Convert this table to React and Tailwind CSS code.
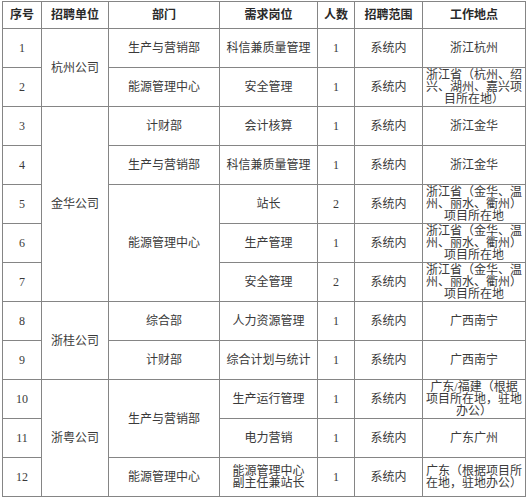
const font = { fontFamily: '"Liberation Serif", "Noto Sans CJK SC", serif' }

const headers = ["序号", "招聘单位", "部门", "需求岗位", "人数", "招聘范围", "工作地点"]
const widths = ["w-[39px]", "w-[67px]", "w-[111px]", "w-[98px]", "w-[37px]", "w-[68px]", "w-[103px]"]

const rows = [
  { no: "1", unit: { text: "杭州公司", span: 2 }, dept: { text: "生产与营销部", span: 1 }, job: ["科信兼质量管理"], num: "1", place: ["浙江杭州"] },
  { no: "2", dept: { text: "能源管理中心", span: 1 }, job: ["安全管理"], num: "1", place: ["浙江省（杭州、绍", "兴、湖州、嘉兴项", "目所在地）"] },
  { no: "3", unit: { text: "金华公司", span: 5 }, dept: { text: "计财部", span: 1 }, job: ["会计核算"], num: "1", place: ["浙江金华"] },
  { no: "4", dept: { text: "生产与营销部", span: 1 }, job: ["科信兼质量管理"], num: "1", place: ["浙江金华"] },
  { no: "5", dept: { text: "能源管理中心", span: 3 }, job: ["站长"], num: "2", place: ["浙江省（金华、温", "州、丽水、衢州）", "项目所在地"] },
  { no: "6", job: ["生产管理"], num: "1", place: ["浙江省（金华、温", "州、丽水、衢州）", "项目所在地"] },
  { no: "7", job: ["安全管理"], num: "2", place: ["浙江省（金华、温", "州、丽水、衢州）", "项目所在地"] },
  { no: "8", unit: { text: "浙桂公司", span: 2 }, dept: { text: "综合部", span: 1 }, job: ["人力资源管理"], num: "1", place: ["广西南宁"] },
  { no: "9", dept: { text: "计财部", span: 1 }, job: ["综合计划与统计"], num: "1", place: ["广西南宁"] },
  { no: "10", unit: { text: "浙粤公司", span: 3 }, dept: { text: "生产与营销部", span: 2 }, job: ["生产运行管理"], num: "1", place: ["广东/福建（根据", "项目所在地，驻地", "办公）"] },
  { no: "11", job: ["电力营销"], num: "1", place: ["广东广州"] },
  { no: "12", dept: { text: "能源管理中心", span: 1 }, job: ["能源管理中心", "副主任兼站长"], num: "1", place: ["广东（根据项目所", "在地，驻地办公）"] },
]

function Lines({ lines }) {
  return lines.map((l, i) => (
    <span key={i} className="block">{l}</span>
  ))
}

export default function App() {
  const cell = "border border-[#858585] text-center align-middle p-0"
  return (
    <div className="bg-white w-[527px] h-[500px] pt-px pl-[2px]" style={font}>
      <table className="table-fixed border-collapse w-[523px] text-[12px] leading-[12px] text-[#3a3a3a]">
        <colgroup>
          {widths.map((w, i) => <col key={i} className={w} />)}
        </colgroup>
        <thead>
          <tr className="h-[27px]">
            {headers.map((h) => (
              <th key={h} className={cell + " font-bold text-[#2a2a2a]"}>{h}</th>
            ))}
          </tr>
        </thead>
        <tbody>
          {rows.map((r) => (
            <tr key={r.no} className="h-[39px]">
              <td className={cell}>{r.no}</td>
              {r.unit && <td rowSpan={r.unit.span} className={cell}>{r.unit.text}</td>}
              {r.dept && <td rowSpan={r.dept.span} className={cell}>{r.dept.text}</td>}
              <td className={cell}><Lines lines={r.job} /></td>
              <td className={cell}>{r.num}</td>
              <td className={cell}>系统内</td>
              <td className={cell}><Lines lines={r.place} /></td>
            </tr>
          ))}
        </tbody>
      </table>
    </div>
  )
}
